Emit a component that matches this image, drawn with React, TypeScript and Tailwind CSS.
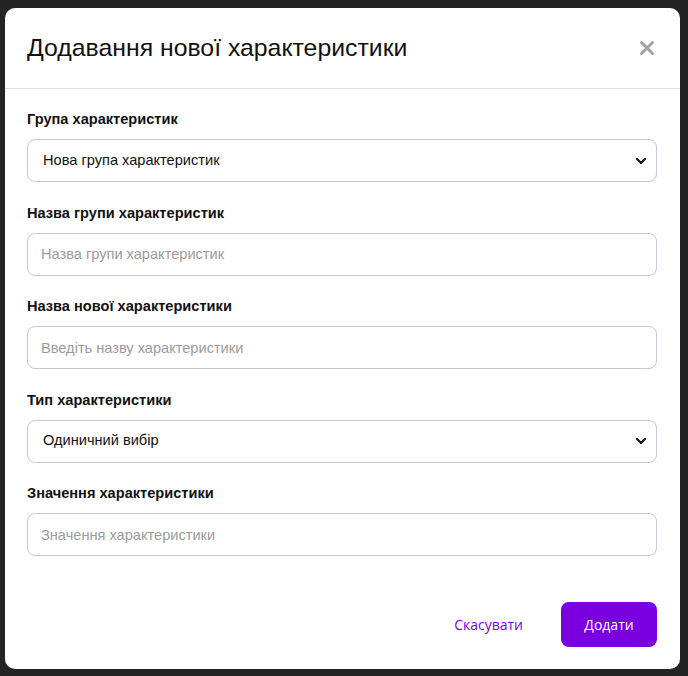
import { X } from 'lucide-react';

const fields = [
    { label: 'Група характеристик', kind: 'select', value: 'Нова група характеристик' },
    { label: 'Назва групи характеристик', kind: 'input', placeholder: 'Назва групи характеристик' },
    { label: 'Назва нової характеристики', kind: 'input', placeholder: 'Введіть назву характеристики' },
    { label: 'Тип характеристики', kind: 'select', value: 'Одиничний вибір' },
    { label: 'Значення характеристики', kind: 'input', placeholder: 'Значення характеристики' },
];

const Chevron = () => (
    <svg width="12" height="8" viewBox="0 0 12 8" className="absolute right-[10px] top-1/2 -translate-y-1/2 pointer-events-none">
        <path d="M2 2 L6 6 L10 2" fill="none" stroke="#111" strokeWidth="2.2" strokeLinecap="round" strokeLinejoin="round" />
    </svg>
);

const App = () => {
    return (
        <div className="w-[688px] h-[676px] bg-[#242424] pt-[8px] pl-[5px] font-['Liberation_Sans',Arial,sans-serif]">
            <div className="w-[675px] h-[661px] bg-white rounded-[10px] flex flex-col">
                {/* Header */}
                <div className="h-[81px] shrink-0 flex items-center justify-between pl-[22px] pr-[22px] border-b border-[#dedede]">
                    <h1 className="text-[24.8px] text-[#111] leading-none">Додавання нової характеристики</h1>
                    <button className="text-[#a3a3a3]">
                        <X size={22} strokeWidth={3.2} />
                    </button>
                </div>

                {/* Body */}
                <div className="flex flex-col gap-[20.5px] pt-[20px] pl-[22px] pr-[23px]">
                    {fields.map((f) => (
                        <div key={f.label} className="flex flex-col gap-[10px]">
                            <label className="text-[14.6px] font-bold leading-[20px] text-[#111]">{f.label}</label>
                            {f.kind === 'select' ? (
                                <div className="relative">
                                    <select
                                        defaultValue={f.value}
                                        className="appearance-none w-full h-[43px] rounded-[8px] border border-[#c9c6d9] bg-white pl-[15px] text-[14.6px] text-[#111] outline-none"
                                    >
                                        <option>{f.value}</option>
                                    </select>
                                    <Chevron />
                                </div>
                            ) : (
                                <input
                                    placeholder={f.placeholder}
                                    className="w-full h-[43px] rounded-[8px] border border-[#c9c6d9] bg-white pl-[13px] text-[14.6px] text-[#111] placeholder:text-[#9b9b9b] outline-none"
                                />
                            )}
                        </div>
                    ))}
                </div>

                {/* Footer */}
                <div className="mt-auto mb-[22px] flex items-center justify-end gap-[38px] pr-[23px]">
                    <button className="text-[14px] text-[#7a00e0] font-['Open_Sans',sans-serif]">Скасувати</button>
                    <button className="w-[96px] h-[45px] rounded-[8px] bg-[#7b00e0] text-white text-[14px] font-['Open_Sans',sans-serif]">
                        Додати
                    </button>
                </div>
            </div>
        </div>
    );
};

export default App;
